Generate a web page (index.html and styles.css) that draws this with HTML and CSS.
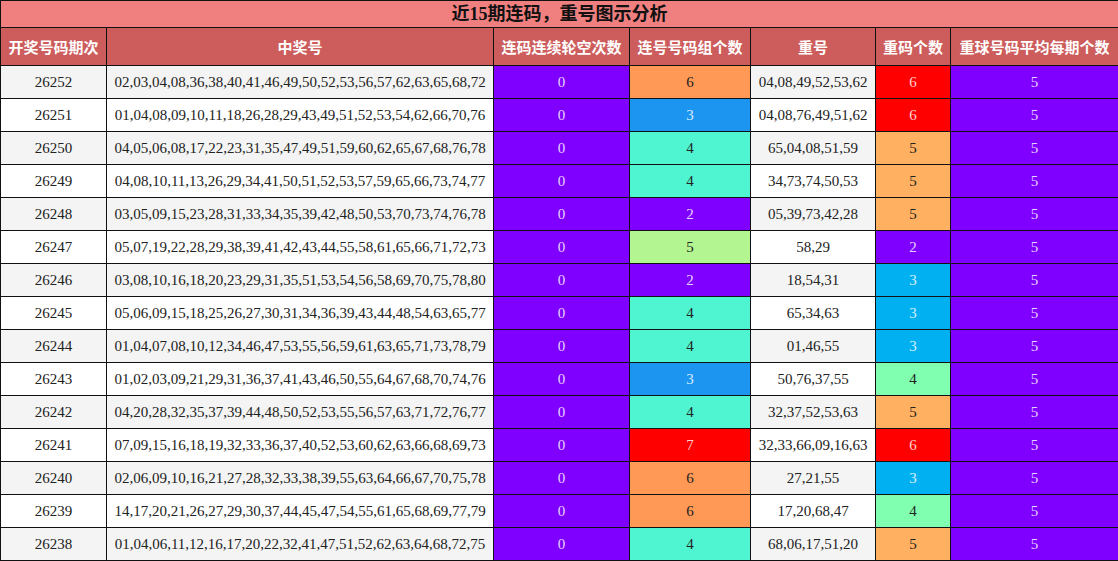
FILE: index.html
```html
<!DOCTYPE html>
<html lang="zh">
<head>
<meta charset="utf-8">
<link rel="stylesheet" href="styles.css">
</head>
<body>
<table class="grid">
<colgroup>
<col class="c1"><col class="c2"><col class="c3"><col class="c4"><col class="c5"><col class="c6"><col class="c7">
</colgroup>
<thead>
<tr class="title"><th colspan="7">近15期连码，重号图示分析</th></tr>
<tr class="head"><th>开奖号码期次</th><th>中奖号</th><th>连码连续轮空次数</th><th>连号号码组个数</th><th>重号</th><th>重码个数</th><th>重球号码平均每期个数</th></tr>
</thead>
<tbody>
<tr class="odd"><td>26252</td><td>02,03,04,08,36,38,40,41,46,49,50,52,53,56,57,62,63,65,68,72</td><td class="purple">0</td><td class="orange">6</td><td>04,08,49,52,53,62</td><td class="red">6</td><td class="purple">5</td></tr>
<tr><td>26251</td><td>01,04,08,09,10,11,18,26,28,29,43,49,51,52,53,54,62,66,70,76</td><td class="purple">0</td><td class="blue">3</td><td>04,08,76,49,51,62</td><td class="red">6</td><td class="purple">5</td></tr>
<tr class="odd"><td>26250</td><td>04,05,06,08,17,22,23,31,35,47,49,51,59,60,62,65,67,68,76,78</td><td class="purple">0</td><td class="teal">4</td><td>65,04,08,51,59</td><td class="peach">5</td><td class="purple">5</td></tr>
<tr><td>26249</td><td>04,08,10,11,13,26,29,34,41,50,51,52,53,57,59,65,66,73,74,77</td><td class="purple">0</td><td class="teal">4</td><td>34,73,74,50,53</td><td class="peach">5</td><td class="purple">5</td></tr>
<tr class="odd"><td>26248</td><td>03,05,09,15,23,28,31,33,34,35,39,42,48,50,53,70,73,74,76,78</td><td class="purple">0</td><td class="purple">2</td><td>05,39,73,42,28</td><td class="peach">5</td><td class="purple">5</td></tr>
<tr><td>26247</td><td>05,07,19,22,28,29,38,39,41,42,43,44,55,58,61,65,66,71,72,73</td><td class="purple">0</td><td class="green">5</td><td>58,29</td><td class="purple">2</td><td class="purple">5</td></tr>
<tr class="odd"><td>26246</td><td>03,08,10,16,18,20,23,29,31,35,51,53,54,56,58,69,70,75,78,80</td><td class="purple">0</td><td class="purple">2</td><td>18,54,31</td><td class="cyan">3</td><td class="purple">5</td></tr>
<tr><td>26245</td><td>05,06,09,15,18,25,26,27,30,31,34,36,39,43,44,48,54,63,65,77</td><td class="purple">0</td><td class="teal">4</td><td>65,34,63</td><td class="cyan">3</td><td class="purple">5</td></tr>
<tr class="odd"><td>26244</td><td>01,04,07,08,10,12,34,46,47,53,55,56,59,61,63,65,71,73,78,79</td><td class="purple">0</td><td class="teal">4</td><td>01,46,55</td><td class="cyan">3</td><td class="purple">5</td></tr>
<tr><td>26243</td><td>01,02,03,09,21,29,31,36,37,41,43,46,50,55,64,67,68,70,74,76</td><td class="purple">0</td><td class="blue">3</td><td>50,76,37,55</td><td class="mint">4</td><td class="purple">5</td></tr>
<tr class="odd"><td>26242</td><td>04,20,28,32,35,37,39,44,48,50,52,53,55,56,57,63,71,72,76,77</td><td class="purple">0</td><td class="teal">4</td><td>32,37,52,53,63</td><td class="peach">5</td><td class="purple">5</td></tr>
<tr><td>26241</td><td>07,09,15,16,18,19,32,33,36,37,40,52,53,60,62,63,66,68,69,73</td><td class="purple">0</td><td class="red">7</td><td>32,33,66,09,16,63</td><td class="red">6</td><td class="purple">5</td></tr>
<tr class="odd"><td>26240</td><td>02,06,09,10,16,21,27,28,32,33,38,39,55,63,64,66,67,70,75,78</td><td class="purple">0</td><td class="orange">6</td><td>27,21,55</td><td class="cyan">3</td><td class="purple">5</td></tr>
<tr><td>26239</td><td>14,17,20,21,26,27,29,30,37,44,45,47,54,55,61,65,68,69,77,79</td><td class="purple">0</td><td class="orange">6</td><td>17,20,68,47</td><td class="mint">4</td><td class="purple">5</td></tr>
<tr class="odd"><td>26238</td><td>01,04,06,11,12,16,17,20,22,32,41,47,51,52,62,63,64,68,72,75</td><td class="purple">0</td><td class="teal">4</td><td>68,06,17,51,20</td><td class="peach">5</td><td class="purple">5</td></tr>
</tbody>
</table>
</body>
</html>
```

FILE: styles.css
```css
html, body {
  margin: 0;
  padding: 0;
  background: #ffffff;
}
.grid {
  border-collapse: collapse;
  table-layout: fixed;
  width: 1118px;
  font-family: "Liberation Serif", "Noto Sans CJK SC", serif;
  font-size: 15px;
  color: #222222;
}
.c1 { width: 106px; }
.c2 { width: 387px; }
.c3 { width: 136px; }
.c4 { width: 121px; }
.c5 { width: 125px; }
.c6 { width: 75px; }
.c7 { width: 168px; }
.grid th, .grid td {
  border: 1px solid #111111;
  padding: 0;
  text-align: center;
  white-space: nowrap;
  overflow: hidden;
}
.title th {
  height: 26px;
  background: #f08080;
  color: #111111;
  font-size: 18px;
  font-weight: bold;
  line-height: 26px;
}
.head th {
  height: 37px;
  background: #cd5c5c;
  color: #ffffff;
  font-size: 15px;
  font-weight: bold;
}
.grid td {
  height: 32px;
  background: #ffffff;
}
.odd td { background: #f4f4f4; }
.grid td.purple { background: #8000ff; color: #e6d4ff; }
.grid td.orange { background: #ff9955; color: #222222; }
.grid td.blue { background: #1b95f0; color: #dcecff; }
.grid td.teal { background: #4ff5d0; color: #222222; }
.grid td.green { background: #b3f590; color: #222222; }
.grid td.red { background: #ff0000; color: #ffd0d0; }
.grid td.peach { background: #ffb060; color: #222222; }
.grid td.cyan { background: #00b0f0; color: #d8f0ff; }
.grid td.mint { background: #80ffb0; color: #222222; }
```
